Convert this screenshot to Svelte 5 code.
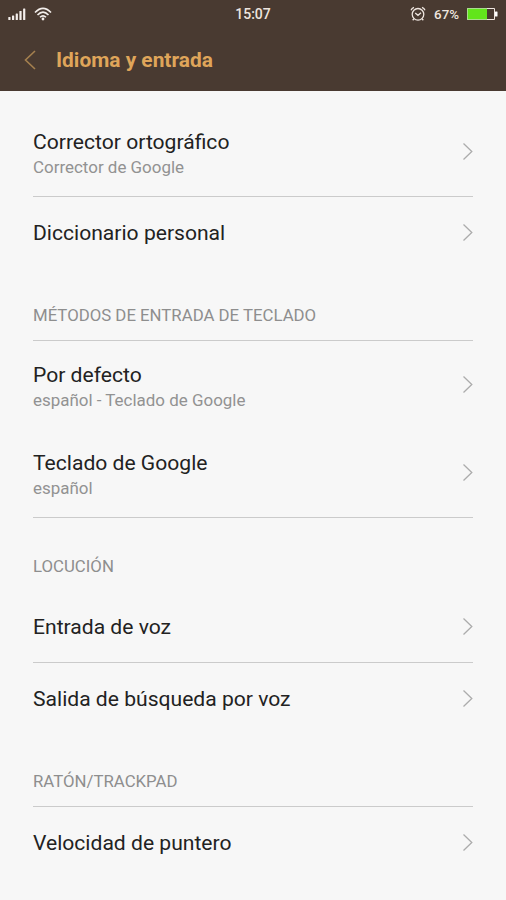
<script>
  const groups = [
    {
      rows: [
        { title: "Corrector ortográfico", summary: "Corrector de Google", height: 89, line: true },
        { title: "Diccionario personal", height: 71 },
      ],
    },
    {
      heading: "MÉTODOS DE ENTRADA DE TECLADO",
      line: true,
      height: 73,
      rows: [
        { title: "Por defecto", summary: "español - Teclado de Google", height: 88 },
        { title: "Teclado de Google", summary: "español", height: 89, line: true },
      ],
    },
    {
      heading: "LOCUCIÓN",
      height: 73,
      rows: [
        { title: "Entrada de voz", height: 72, line: true },
        { title: "Salida de búsqueda por voz", height: 71 },
      ],
    },
    {
      heading: "RATÓN/TRACKPAD",
      line: true,
      height: 73,
      rows: [{ title: "Velocidad de puntero", height: 72 }],
    },
  ];
</script>

<div class="screen">
  <header>
    <div class="status">
      <div class="side">
        <svg width="18" height="12" viewBox="0 0 18 12" fill="#f3eeeb">
          <rect x="0.3" y="9" width="2.2" height="3" rx=".5" />
          <rect x="4" y="7.5" width="2.2" height="4.5" rx=".5" />
          <rect x="7.7" y="5.5" width="2.2" height="6.5" rx=".5" />
          <rect x="11.4" y="3" width="2.2" height="9" rx=".5" />
          <rect x="15.1" y="0.5" width="2.2" height="11.5" rx=".5" />
        </svg>
        <svg width="18" height="14" viewBox="0 0 18 14" fill="none" stroke="#f3eeeb" stroke-width="1.6">
          <path d="M1 5.5Q9 -2.7 17 5.5M3.5 8Q9 2.3 14.5 8M6 10.3Q9 7.3 12 10.3" />
          <circle cx="9" cy="12" r="1.4" fill="#f3eeeb" stroke="none" />
        </svg>
      </div>
      <span>15:07</span>
      <div class="side right">
        <svg width="16" height="16" viewBox="0 0 16 16" fill="none" stroke="#eee5df" stroke-width="1.3">
          <circle cx="8" cy="8.3" r="5.8" />
          <path d="M5.2 7L8 9.3L11 6.8M1 4.2Q1.8 2.2 4 1.4M15 4.2Q14.2 2.2 12 1.4M4 12.8L2.7 14.3M12 12.8L13.3 14.3" />
        </svg>
        <span class="percent">67%</span>
        <svg width="31" height="12" viewBox="0 0 31 12">
          <path d="M19 .5H27.5V11.5H19" fill="none" stroke="#eee5df" />
          <rect x="0" y="0" width="20" height="12" fill="#a9dc8d" />
          <rect x="1" y="1" width="19" height="10" fill="#62e51b" />
          <rect x="28" y="3.5" width="2.5" height="5" rx=".5" fill="#fff" />
        </svg>
      </div>
    </div>
    <div class="titlebar">
      <svg width="12" height="20" viewBox="0 0 12 20" fill="none" stroke="#a5804f" stroke-width="1.6">
        <path d="M11 1L1.5 10L11 19" />
      </svg>
      <h1>Idioma y entrada</h1>
    </div>
  </header>

  <main>
    {#each groups as group}
      <section>
        {#if group.heading}
          <h2 class:line={group.line} style:height="{group.height}px">{group.heading}</h2>
        {/if}
        {#each group.rows as row}
          <div class="row" class:line={row.line} style:height="{row.height}px">
            <div class:double={row.summary}>
              <p class="title">{row.title}</p>
              {#if row.summary}
                <p class="summary">{row.summary}</p>
              {/if}
            </div>
            <svg width="11" height="18" viewBox="0 0 11 18" fill="none" stroke="#acacac" stroke-width="1.3">
              <path d="M1.5 .5L9.8 8.5L1.5 16.5" />
            </svg>
          </div>
        {/each}
      </section>
    {/each}
  </main>
</div>

<style>
  :global(body) {
    background: #f7f7f7;
  }

  .screen {
    height: 900px;
    overflow: hidden;
    background: #f7f7f7;
    font-family: Roboto, sans-serif;
  }

  header {
    height: 91px;
    background: #493a31;
    color: #eee5df;
  }

  .status {
    display: flex;
    align-items: center;
    height: 28px;
    padding: 0 8px;
    font-size: 14px;
    font-weight: 500;
  }

  .side {
    display: flex;
    flex: 1;
    align-items: center;
    gap: 8px;
  }

  .right {
    justify-content: flex-end;
  }

  .percent {
    font-size: 13.3px;
  }

  .titlebar {
    display: flex;
    align-items: center;
    height: 63px;
    padding-left: 24px;
    gap: 20px;
  }

  h1 {
    margin: 0;
    color: #dfa55a;
    font-size: 20.9px;
    font-weight: 700;
  }

  main {
    padding: 17px 33px 0;
  }

  h2 {
    display: flex;
    align-items: flex-end;
    box-sizing: border-box;
    margin: 0;
    padding-bottom: 15px;
    color: #8e8e8e;
    font-size: 16.8px;
    font-weight: 400;
    line-height: 19px;
  }

  .row {
    display: flex;
    align-items: center;
    justify-content: space-between;
    box-sizing: border-box;
  }

  .line {
    border-bottom: 1px solid #cbcbcb;
  }

  .double {
    padding-top: 4px;
  }

  p {
    margin: 0;
  }

  .title {
    color: #222;
    font-size: 21.1px;
    line-height: 26px;
  }

  .summary {
    color: #929292;
    font-size: 16.95px;
    line-height: 25px;
  }
</style>
